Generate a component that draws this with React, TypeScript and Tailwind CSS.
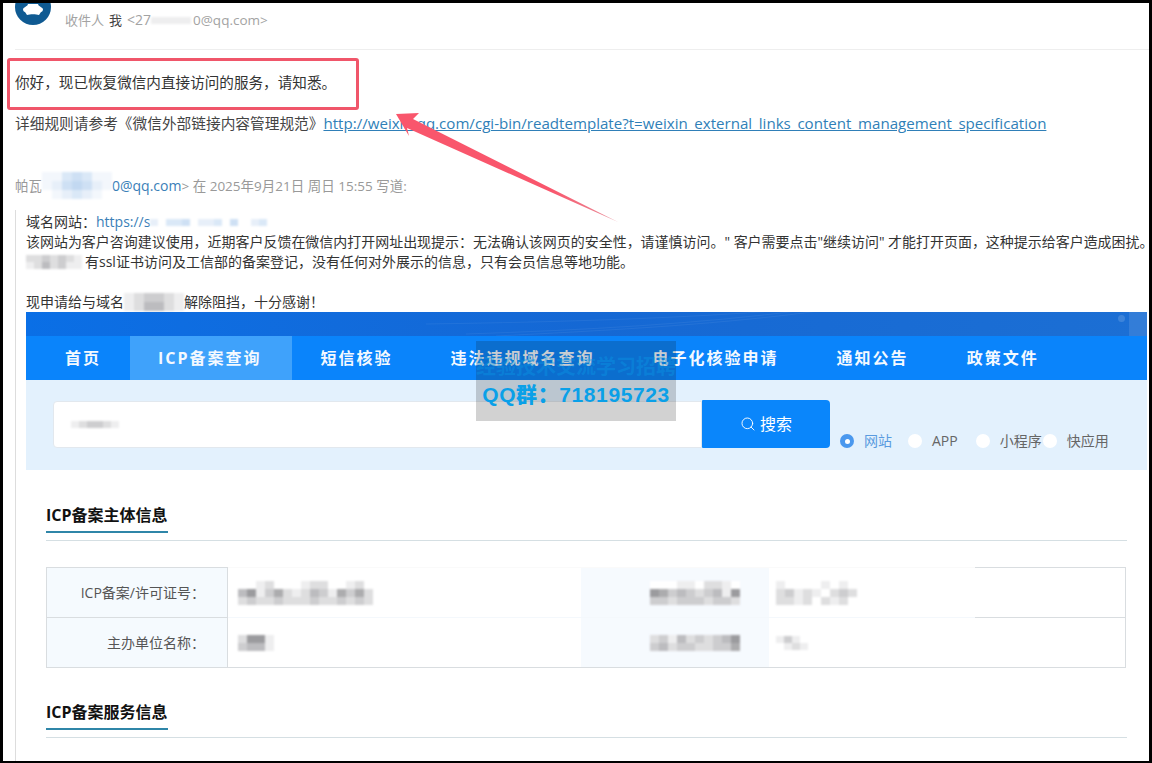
import { Search } from "lucide-react";

const sans = "font-['Open_Sans','Noto_Sans_CJK_SC',sans-serif]";

// pixelated blur over private text; each digit is how strong a cell is
function Mosaic({ rows, cell, tint = "gray" }: { rows: string[]; cell: number; tint?: "gray" | "blue" }) {
  const w = rows[0].length * cell;
  const h = rows.length * (cell - 1);
  return (
    <svg width={w} height={h} className="inline-block align-middle blur-[0.8px] shrink-0">
      {rows.map((row, y) =>
        row.split("").map((c, x) => {
          const v = Number(c) / 9;
          const fill =
            tint === "blue"
              ? `rgb(${255 - v * 110},${255 - v * 70},${255 - v * 25})`
              : `rgb(${255 - v * 150},${255 - v * 150},${255 - v * 145})`;
          return <rect key={`${x}-${y}`} x={x * cell} y={y * (cell - 1)} width={cell} height={cell - 1} fill={fill} />;
        })
      )}
    </svg>
  );
}

const navItems = [
  { label: "首页", cls: "pl-[39px] pr-[29px]" },
  { label: "ICP备案查询", cls: "pl-[28px] pr-[30px] bg-[#3fa2fb]" },
  { label: "短信核验", cls: "px-[29px]" },
  { label: "违法违规域名查询", cls: "px-[29px]" },
  { label: "电子化核验申请", cls: "px-[29px]" },
  { label: "通知公告", cls: "px-[29px]" },
  { label: "政策文件", cls: "px-[29px]" },
];

const radios = [
  { label: "网站", active: true, cls: "ml-[10px]" },
  { label: "APP", active: false, cls: "ml-[16px]" },
  { label: "小程序", active: false, cls: "ml-[18px]" },
  { label: "快应用", active: false, cls: "ml-px" },
];

function SectionTitle({ text }: { text: string }) {
  return (
    <div className="mt-[34px]">
      <div className="w-fit h-[29px] border-b-[2.5px] border-[#2f86a8] text-[16px] leading-[22px] font-bold text-[#111]">
        {text}
      </div>
      <div className="mt-[7px] h-px bg-[#d5dfe3]" />
    </div>
  );
}

function TableRow({ label, first, a, b, c }: { label: string; first: boolean; a: React.ReactNode; b: React.ReactNode; c: React.ReactNode }) {
  const faint = first ? "border-t border-[#fafafa]" : "border-t border-[#f4f8fc]";
  const edge = "border-t border-[#d9dde0]";
  return (
    <>
      <div className={`h-[50px] border-l border-r border-[#d9dde0] bg-[#f5fafe] pr-[22px] flex items-center justify-end text-[14px] text-[#555] ${edge}`}>
        {label}
      </div>
      <div className={`h-[50px] pl-[10px] flex items-center ${faint}`}>{a}</div>
      <div className={`h-[50px] bg-[#f6fafe] pl-[69px] flex items-center ${faint}`}>{b}</div>
      <div className={`h-[50px] pl-[7px] flex items-center ${faint}`}>{c}</div>
      <div className={`h-[50px] border-r border-[#d9dde0] ${edge}`} />
    </>
  );
}

export default function App() {
  return (
    <div className={`relative w-[1152px] h-[763px] overflow-hidden bg-black pt-[3px] pl-[3px] pr-[3px] pb-[2px] ${sans}`}>
      <div className="h-full bg-white pl-3 flex flex-col">
        {/* mail header */}
        <div className="h-[47px] shrink-0 overflow-hidden border-b border-[#eeeeee] flex items-start">
          <svg width="36" height="36" viewBox="0 0 36 36" className="-mt-[14px] shrink-0">
            <circle cx="18" cy="18" r="18" fill="#0f5a92" />
            <path d="M8 20c2-3 4-2 5-5h10c1 3 3 2 5 5 0 2-1 3-2 3l-2 3c-3-1-9-1-12 0l-2-3c-1 0-2-1-2-3z" fill="#fff" />
          </svg>
          <div className="ml-[14px] mt-[8px] flex items-center text-[13px] leading-[18px] text-[#a3a3a3]">
            <span>收件人</span>
            <span className="ml-[5px] text-[#444]">我</span>
            <span className="ml-[5px] text-[14px]">&lt;27</span>
            <Mosaic rows={["11111"]} cell={8} />
            <span className="text-[13.5px] ml-[2px]">0@qq.com&gt;</span>
          </div>
        </div>

        {/* reply body */}
        <p className="mt-[21px] text-[14.6px] leading-[22px] text-[#333]">你好，现已恢复微信内直接访问的服务，请知悉。</p>
        <p className="mt-[19px] text-[14.7px] leading-[22px] text-[#444] whitespace-nowrap">
          详细规则请参考《微信外部链接内容管理规范》
          <a className="text-[15.1px] text-[#2f7fb8] underline">http://weixin.qq.com/cgi-bin/readtemplate?t=weixin_external_links_content_management_specification</a>
        </p>
        <p className="mt-[38px] flex items-center text-[13.5px] leading-[20px] text-[#999] whitespace-nowrap">
          <span>帕瓦</span>
          <Mosaic tint="blue" rows={["1134311", "1245421", "0123210"]} cell={10} />
          <span className="text-[#3a80b8] text-[14px]">0@qq.com</span>
          <span>&gt; 在 2025年9月21日 周日 15:55 写道:</span>
        </p>

        {/* quoted mail */}
        <div className="mt-[11px] flex-1 border-l border-[#dddddd] pl-[10px] text-[14px] leading-[20px] text-[#333]">
          <div className="flex items-center whitespace-nowrap pt-[2px]">
            <span>域名网站：</span>
            <span className="text-[#3a80b8]">https://s</span>
            <Mosaic tint="blue" rows={["203340223040"]} cell={8} />
            <span className="w-[5px]" />
            <Mosaic tint="blue" rows={["230"]} cell={8} />
          </div>
          <p className="whitespace-nowrap text-[13.98px]">该网站为客户咨询建议使用，近期客户反馈在微信内打开网址出现提示：无法确认该网页的安全性，请谨慎访问。" 客户需要点击"继续访问" 才能打开页面，这种提示给客户造成困扰。</p>
          <div className="flex items-center whitespace-nowrap">
            <Mosaic rows={["2232321", "1242311"]} cell={8} />
            <span className="ml-[3px]">有ssl证书访问及工信部的备案登记，没有任何对外展示的信息，只有会员信息等地功能。</span>
          </div>
          <div className="h-5" />
          <div className="flex items-center whitespace-nowrap">
            <span>现申请给与域名</span>
            <Mosaic rows={["123321", "124421"]} cell={10} />
            <span>解除阻挡，十分感谢！</span>
          </div>

          {/* screenshot of the ICP lookup site */}
          <div className="w-[1121px]">
            <div className="relative h-[24px] overflow-hidden bg-gradient-to-r from-[#0a6fe6] via-[#1568d4] to-[#1c6fd4]">
              <svg width="1121" height="24" className="absolute inset-0" fill="none" stroke="#ffffff" strokeOpacity="0.06">
                <path d="M440 22c120-4 230-10 340-24" />
                <path d="M470 24c120-6 230-12 330-26" />
                <path d="M400 12c140-2 260-6 360-14" />
              </svg>
              <div className="absolute right-[22px] top-[3px] h-[7px] w-[7px] rounded-full bg-white/15" />
              <div className="absolute right-0 top-0 h-[24px] w-[18px] bg-white/10" />
            </div>
            <div className="h-[44px] flex items-stretch bg-[#0a84fb]">
              {navItems.map((n) => (
                <div key={n.label} className={`flex items-center text-[16px] font-bold tracking-[2px] text-[#f4f9ff] whitespace-nowrap ${n.cls}`}>
                  {n.label}
                </div>
              ))}
            </div>
            <div className="h-[90px] bg-[#e3f1fd] pl-[27px] pt-[20px]">
              <div className="flex items-end">
                <div className="w-[649px] h-[47px] rounded-l-[4px] bg-white border border-[#e2e8ee] flex items-center pl-[17px]">
                  <Mosaic rows={["123321"]} cell={8} />
                </div>
                <div className="w-[128px] h-[48px] rounded-r-[4px] rounded-l-[1px] bg-[#0a86fb] flex items-center justify-center gap-[4px] text-[16px] text-white">
                  <Search size={16} strokeWidth={1.4} />
                  <span>搜索</span>
                </div>
                {radios.map((r) => (
                  <div key={r.label} className={`flex items-center gap-[10px] text-[14px] leading-[14px] ${r.cls} ${r.active ? "text-[#5a9be0]" : "text-[#666]"}`}>
                    {r.active ? (
                      <span className="w-[14px] h-[14px] rounded-full bg-[#4a98ee] flex items-center justify-center">
                        <span className="w-[5px] h-[5px] rounded-full bg-white" />
                      </span>
                    ) : (
                      <span className="w-[14px] h-[14px] rounded-full bg-white" />
                    )}
                    <span>{r.label}</span>
                  </div>
                ))}
              </div>
            </div>

            <div className="px-[20px]">
              <SectionTitle text="ICP备案主体信息" />
              <div className="mt-[26px] grid grid-cols-[182px_353px_188px_206px_151px]">
                <TableRow
                  first
                  label="ICP备案/许可证号："
                  a={<Mosaic cell={9} rows={["001200012200120", "461352124315352", "232232223223232"]} />}
                  b={<Mosaic cell={9} rows={["0001102210", "6534323416", "3323332332"]} />}
                  c={<Mosaic cell={9} rows={["100001010", "231210232", "221202120"]} />}
                />
                <TableRow
                  first={false}
                  label="主办单位名称："
                  a={<Mosaic cell={9} rows={["2661", "3441"]} />}
                  b={<Mosaic cell={9} rows={["2314232346", "3423322335"]} />}
                  c={<Mosaic cell={8} rows={["1310", "0121"]} />}
                />
                <div className="col-start-1 col-span-5 h-px -mb-px bg-[#d9dde0]" />
              </div>
              <SectionTitle text="ICP备案服务信息" />
            </div>
          </div>
        </div>
      </div>

      {/* annotations laid over the screenshot */}
      <div className="absolute left-[7px] top-[58px] w-[352px] h-[52px] rounded-[3px] border-[3px] border-[#f0566a]" />
      <svg width="1152" height="763" className="absolute inset-0 pointer-events-none">
        <defs>
          <linearGradient id="tail" x1="395" y1="114" x2="618" y2="222" gradientUnits="userSpaceOnUse">
            <stop offset="0.7" stopColor="#f9566c" />
            <stop offset="1" stopColor="#e8909c" />
          </linearGradient>
        </defs>
        <polygon points="396,114 419,113 413,119 618,222 407,128 409,136" fill="url(#tail)" />
      </svg>
      <div className="absolute left-[476px] top-[341px] w-[200px] h-[80px] bg-[rgba(15,15,15,0.19)] flex flex-col items-center">
        <div className="mt-[13px] text-[20px] leading-[26px] font-bold text-[#0a9ae6]/40 whitespace-nowrap">经验技术交流学习招聘</div>
        <div className="mt-[1px] text-[21px] leading-[28px] font-black text-[#0aa0e8] whitespace-nowrap font-['Liberation_Sans','Noto_Sans_CJK_SC',sans-serif] tracking-[0.6px]">QQ群：718195723</div>
      </div>
    </div>
  );
}
